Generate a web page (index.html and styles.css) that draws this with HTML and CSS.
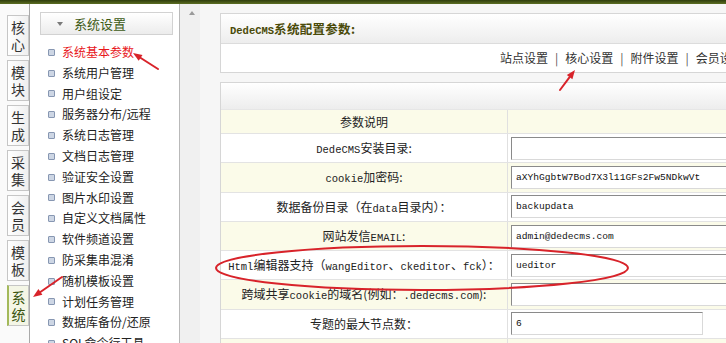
FILE: index.html
```html
<!DOCTYPE html>
<html lang="zh-CN">
<head>
<meta charset="utf-8">
<title>DedeCMS系统配置参数</title>
<link rel="stylesheet" href="styles.css">
</head>
<body>
<div class="topbar"></div>
<div class="frame">
  <nav class="tabs">
    <div class="tab">核<br>心</div>
    <div class="tab">模<br>块</div>
    <div class="tab">生<br>成</div>
    <div class="tab">采<br>集</div>
    <div class="tab">会<br>员</div>
    <div class="tab">模<br>板</div>
    <div class="tab active">系<br>统</div>
  </nav>
  <aside class="menu">
    <div class="menu-head"><span class="caret"></span>系统设置</div>
    <ul class="menu-list">
      <li class="current">系统基本参数</li>
      <li>系统用户管理</li>
      <li>用户组设定</li>
      <li>服务器分布/远程</li>
      <li>系统日志管理</li>
      <li>文档日志管理</li>
      <li>验证安全设置</li>
      <li>图片水印设置</li>
      <li>自定义文档属性</li>
      <li>软件频道设置</li>
      <li>防采集串混淆</li>
      <li>随机模板设置</li>
      <li>计划任务管理</li>
      <li>数据库备份/还原</li>
      <li>SQL命令行工具</li>
    </ul>
  </aside>
  <div class="splitter"><span class="up"></span></div>
  <main class="main">
    <section class="panel head-panel">
      <h1 class="title"><span class="en">DedeCMS</span>系统配置参数:</h1>
      <div class="links">站点设置<i>|</i>核心设置<i>|</i>附件设置<i>|</i>会员设置<i>|</i>互动设置</div>
    </section>
    <section class="panel table-panel">
      <div class="bar"></div>
      <div class="row th"><div class="lbl">参数说明</div><div class="val"></div></div>
      <div class="row"><div class="lbl"><span class="en">DedeCMS</span>安装目录:</div><div class="val"><span class="inp"></span></div></div>
      <div class="row alt"><div class="lbl"><span class="en">cookie</span>加密码:</div><div class="val"><span class="inp">aXYhGgbtW7Bod7X3l11GFs2Fw5NDkwVt</span></div></div>
      <div class="row"><div class="lbl">数据备份目录（在<span class="en">data</span>目录内）：</div><div class="val"><span class="inp">backupdata</span></div></div>
      <div class="row alt"><div class="lbl">网站发信<span class="en">EMAIL</span>:</div><div class="val"><span class="inp">admin@dedecms.com</span></div></div>
      <div class="row"><div class="lbl"><span class="en">Html</span>编辑器支持（<span class="en">wangEditor</span>、<span class="en">ckeditor</span>、<span class="en">fck</span>）：</div><div class="val"><span class="inp">ueditor</span></div></div>
      <div class="row alt"><div class="lbl">跨域共享<span class="en">cookie</span>的域名(例如：<span class="en">.dedecms.com</span>):</div><div class="val"><span class="inp"></span></div></div>
      <div class="row"><div class="lbl">专题的最大节点数：</div><div class="val"><span class="inp short">6</span></div></div>
      <div class="row alt"><div class="lbl"></div><div class="val"></div></div>
    </section>
  </main>
</div>
<svg class="marks" width="726" height="343" viewBox="0 0 726 343">
  <g stroke="#d8232a" stroke-width="2" fill="none" stroke-linecap="round">
    <line x1="158" y1="69" x2="140" y2="57.5"/>
    <line x1="560" y1="90" x2="569.6" y2="77.2"/>
    <line x1="62" y1="277" x2="40.4" y2="292"/>
    <ellipse cx="422" cy="268" rx="206" ry="22"/>
  </g>
  <g fill="#d8232a">
    <polygon points="133,53 142.5,55 138.7,60.8"/>
    <polygon points="575,70 572.4,79.3 566.8,75.1"/>
    <polygon points="33,297 38.4,289 42.4,294.8"/>
  </g>
</svg>
</body>
</html>
```
FILE: styles.css
```css
* { box-sizing: border-box; }
html, body {
  margin: 0;
  width: 726px;
  height: 343px;
  overflow: hidden;
  background: #f7f7f7;
  font-family: "Noto Sans CJK SC", sans-serif;
  font-size: 12px;
  color: #222;
}
body { position: relative; }
.en {
  font-family: "Liberation Mono", "Noto Sans CJK SC", monospace;
  font-size: 10.5px;
}
.topbar {
  height: 4px;
  background: linear-gradient(#2f3d0c, #5c6e22);
}
.frame {
  display: flex;
  height: 339px;
}

/* left vertical tabs */
.tabs {
  width: 30px;
  flex: none;
  background: #fafafa;
  border-right: 1px solid #a9a9a9;
  padding: 11px 0 0 7px;
  display: flex;
  flex-direction: column;
  gap: 4px;
}
.tab {
  width: 22px;
  height: 41px;
  border: 1px solid #c6c6c6;
  background: linear-gradient(to right, #ffffff, #efefef);
  font-size: 14px;
  line-height: 17px;
  color: #333;
  text-align: center;
  padding-top: 3px;
}
.tab.active {
  background: #f4f6e6;
  border-left: 2px solid #a3b95a;
  color: #3b5510;
}

/* menu */
.menu {
  width: 150px;
  flex: none;
  background: #fff;
  border-right: 1px solid #b9b9b9;
  padding: 8px 0 0 10px;
}
.menu-head {
  width: 133px;
  height: 23px;
  border: 1px solid #d2d2d2;
  background: linear-gradient(#ffffff, #ececec);
  color: #3d5a14;
  font-size: 13px;
  line-height: 21px;
  padding-left: 33px;
  display: flex;
  align-items: center;
}
.caret {
  width: 0;
  height: 0;
  border-left: 3px solid transparent;
  border-right: 3px solid transparent;
  border-top: 4px solid #7a7a7a;
  margin-right: 11px;
  margin-left: -17px;
}
.menu-list {
  list-style: none;
  margin: 7px 0 0;
  padding: 0 0 0 8px;
}
.menu-list li {
  height: 20.8px;
  line-height: 20.8px;
  font-size: 12px;
  color: #222;
  display: flex;
  align-items: center;
  white-space: nowrap;
}
.menu-list li::before {
  content: "";
  width: 5px;
  height: 5px;
  border: 1px solid #8797b2;
  background: #cdd6e4;
  border-radius: 1px;
  margin-right: 7px;
  flex: none;
}
.menu-list li.current { color: #e8161b; }

/* splitter */
.splitter {
  width: 20px;
  flex: none;
  background: #f0f0f0;
  display: flex;
  justify-content: center;
  padding: 7px 0 0 4px;
}
.up {
  width: 0;
  height: 0;
  border-left: 3px solid transparent;
  border-right: 3px solid transparent;
  border-bottom: 4px solid #9a9a9a;
}

/* main */
.main {
  flex: none;
  width: 640px;
  padding: 9px 0 0 20px;
  background: #f6f6f6;
}
.panel {
  width: 620px;
  border: 1px solid #d6d6d6;
  background: #fff;
}
.title {
  margin: 0;
  height: 30px;
  border-bottom: 1px solid #dcdcdc;
  background: linear-gradient(#ffffff, #ededed);
  font-size: 12.5px;
  font-weight: bold;
  color: #4a4a08;
  line-height: 29px;
  padding-left: 9px;
  letter-spacing: 0.3px;
}
.title .en { font-weight: bold; font-size: 10.5px; letter-spacing: 0; }
.links {
  height: 28px;
  line-height: 28px;
  padding-left: 279px;
  color: #333;
  white-space: nowrap;
}
.links i {
  font-style: normal;
  margin: 0 7px;
  color: #555;
}
.table-panel { margin-top: 9px; }
.bar {
  height: 27px;
  background: linear-gradient(#ffffff, #ededed);
  border-bottom: 1px solid #e6e6e6;
}
.row {
  display: flex;
  height: 29.3px;
  border-bottom: 1px solid #e3e3e3;
  background: #fff;
}
.row.alt, .row.th { background: #fbfbe9; }
.row.th { height: 24px; }
.lbl {
  width: 286px;
  flex: none;
  line-height: 28px;
  text-align: center;
  white-space: nowrap;
  color: #222;
}
.row.th .lbl { line-height: 23px; }
.val {
  flex: 1;
  border-left: 1px solid #e0e0e0;
  display: flex;
  align-items: center;
  padding-left: 3px;
}
.inp {
  display: block;
  width: 300px;
  height: 23px;
  background: #fff;
  border: 1px solid;
  border-color: #8a8a8a #d9d9d9 #d9d9d9 #8a8a8a;
  font-family: "Liberation Mono", monospace;
  font-size: 9.6px;
  line-height: 21px;
  padding-left: 4px;
  color: #111;
  white-space: nowrap;
}
.inp.short { width: 192px; }

/* annotation overlay */
.marks {
  position: absolute;
  left: 0;
  top: 0;
  pointer-events: none;
}
```
